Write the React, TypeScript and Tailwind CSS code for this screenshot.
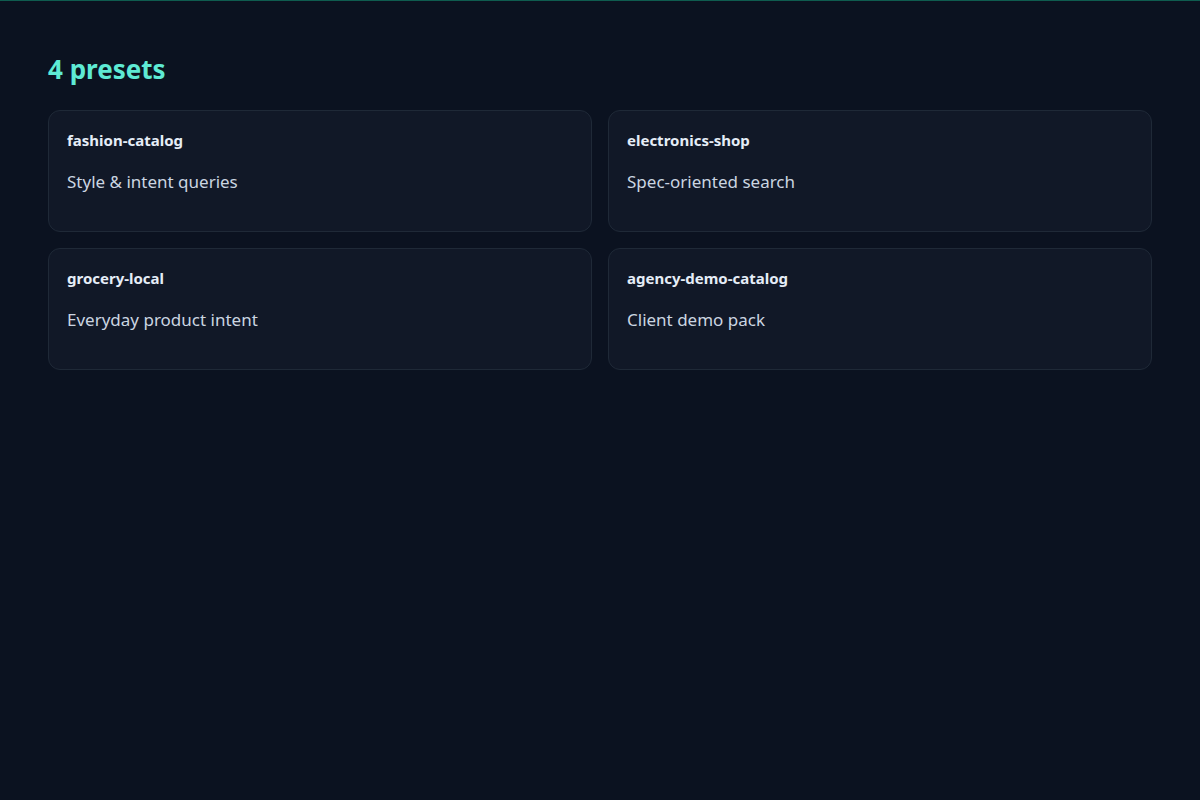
const presets = [
  { name: "fashion-catalog", desc: "Style & intent queries" },
  { name: "electronics-shop", desc: "Spec-oriented search" },
  { name: "grocery-local", desc: "Everyday product intent" },
  { name: "agency-demo-catalog", desc: "Client demo pack" },
];

export default function App() {
  return (
    <div
      className="min-h-[800px] w-full bg-[#0b1220] border-t border-[#0f5c4f]"
      style={{ fontFamily: '"Noto Sans", "Open Sans", sans-serif' }}
    >
      <div className="px-12 pt-[51px]">
        <h1 className="text-[26px] leading-[34px] font-bold text-[#5eead4]">4 presets</h1>
        <div className="mt-[24px] grid grid-cols-2 gap-x-4 gap-y-4">
          {presets.map((p) => (
            <div
              key={p.name}
              className="h-[122px] rounded-xl border border-[#1f2937] bg-[#111827] px-[18px] pt-[19px]"
            >
              <div className="text-[15px] leading-5 font-bold text-[#e5edf7]">{p.name}</div>
              <div className="mt-[20px] text-[17px] leading-6 text-[#cbd5e1]">{p.desc}</div>
            </div>
          ))}
        </div>
      </div>
    </div>
  );
}
